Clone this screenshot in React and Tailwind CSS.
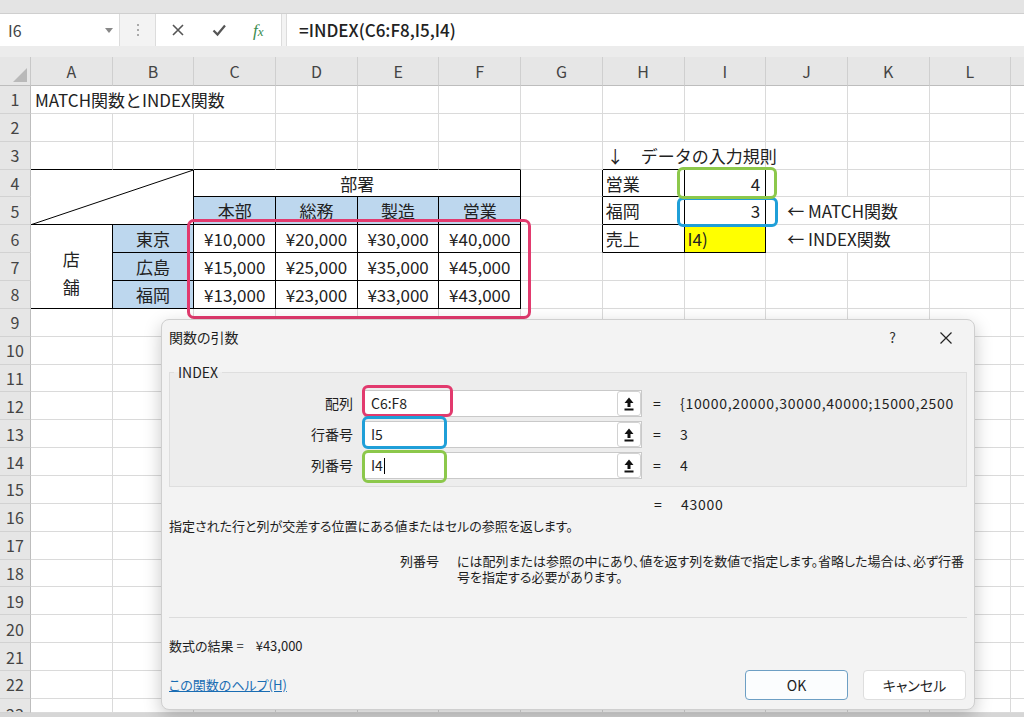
import React from "react";

const COLS = ["A", "B", "C", "D", "E", "F", "G", "H", "I", "J", "K", "L", "M"];
const ROWS = Array.from({ length: 23 }, (_, i) => i + 1);

const BLUE = "bg-[#bdd7ee]";

// cells that carry something (text, colour, merge)
const cells = {
  A1: { cls: "col-span-3 justify-start pl-[4px]", text: "MATCH関数とINDEX関数" },
  H3: { cls: "col-span-2 justify-start pl-[4px]", text: "↓　データの入力規則" },
  A4: { cls: "col-span-2 row-span-2 relative", diag: true },
  C4: { cls: "col-span-4 justify-center", text: "部署" },
  C5: { cls: `${BLUE} justify-center`, text: "本部" },
  D5: { cls: `${BLUE} justify-center`, text: "総務" },
  E5: { cls: `${BLUE} justify-center`, text: "製造" },
  F5: { cls: `${BLUE} justify-center`, text: "営業" },
  A6: { cls: "row-span-3 flex-col justify-center gap-[11px] pt-[11px]", lines: ["店", "舗"] },
  B6: { cls: `${BLUE} justify-center`, text: "東京" },
  B7: { cls: `${BLUE} justify-center`, text: "広島" },
  B8: { cls: `${BLUE} justify-center`, text: "福岡" },
  C6: { cls: "justify-center", text: "¥10,000" },
  D6: { cls: "justify-center", text: "¥20,000" },
  E6: { cls: "justify-center", text: "¥30,000" },
  F6: { cls: "justify-center", text: "¥40,000" },
  C7: { cls: "justify-center", text: "¥15,000" },
  D7: { cls: "justify-center", text: "¥25,000" },
  E7: { cls: "justify-center", text: "¥35,000" },
  F7: { cls: "justify-center", text: "¥45,000" },
  C8: { cls: "justify-center", text: "¥13,000" },
  D8: { cls: "justify-center", text: "¥23,000" },
  E8: { cls: "justify-center", text: "¥33,000" },
  F8: { cls: "justify-center", text: "¥43,000" },
  H4: { cls: "justify-start pl-[3px]", text: "営業" },
  I4: { cls: "justify-end pr-[5px]", text: "4" },
  H5: { cls: "justify-start pl-[3px]", text: "福岡" },
  I5: { cls: "justify-end pr-[5px]", text: "3" },
  H6: { cls: "justify-start pl-[3px]", text: "売上" },
  I6: { cls: "bg-[#ffff00] justify-start pl-[3px]", text: "I4)" },
  J5: { cls: "col-span-2 justify-start pl-[21px]", text: "← MATCH関数" },
  J6: { cls: "col-span-2 justify-start pl-[21px]", text: "← INDEX関数" },
};

const covered = new Set(["B1", "C1", "I3", "B4", "A5", "B5", "D4", "E4", "F4", "A7", "A8", "K5", "K6"]);

const borderFor = (r, c) => {
  const t1 = r >= 4 && r <= 8 && c >= 0 && c <= 5;
  const t2 = r >= 4 && r <= 6 && (c === 7 || c === 8);
  const right = t1 || t2 || (c === 6 && r >= 4 && r <= 6);
  const bottom = t1 || t2 || (r === 3 && (c <= 5 || c === 7 || c === 8));
  return `${right ? "border-r-black" : "border-r-[#dadada]"} ${bottom ? "border-b-black" : "border-b-[#dadada]"}`;
};

function FormulaBar() {
  return (
    <div className="flex h-[32px] bg-[#f3f3f3]">
      <div className="flex w-[120px] items-center justify-between border-r border-[#dcdcdc] bg-white pl-[8px] pr-[6px] text-[16px] text-[#444]">
        <span>I6</span>
        <svg width="8" height="5" viewBox="0 0 8 5">
          <path d="M0 0 L8 0 L4 5 Z" fill="#888" />
        </svg>
      </div>
      <div className="flex w-[35px] flex-col items-center justify-center gap-[3px]">
        <span className="h-[2px] w-[2px] bg-[#aaa]" />
        <span className="h-[2px] w-[2px] bg-[#aaa]" />
        <span className="h-[2px] w-[2px] bg-[#aaa]" />
      </div>
      <div className="flex w-[127px] items-center gap-[27px] border-x border-[#dcdcdc] bg-white pl-[15px]">
        <svg width="14" height="14" viewBox="0 0 14 14">
          <path d="M2 2 L12 12 M12 2 L2 12" stroke="#555" strokeWidth="1.6" />
        </svg>
        <svg width="14" height="14" viewBox="0 0 14 14">
          <path d="M1.5 7.5 L5.5 11.5 L13 2.5" stroke="#555" strokeWidth="2.2" fill="none" />
        </svg>
        <span className="w-[14px] font-['Liberation_Serif',serif] text-[17px] italic leading-none text-[#3a8c4e]">
          f<span className="text-[13px]">x</span>
        </span>
      </div>
      <div className="w-[4px]" />
      <div className="flex flex-1 items-center border-l border-[#dcdcdc] bg-white pl-[12px] text-[17px] font-medium text-[#222]">
        =INDEX(C6:F8,I5,I4)
      </div>
    </div>
  );
}

function Sheet() {
  const items = [];
  items.push(
    <div key="corner" className="relative border-r border-b border-r-[#c8c8c8] border-b-[#bdbdbd] bg-[#e6e6e6]">
      <svg className="absolute bottom-[3px] right-[3px]" width="14" height="14" viewBox="0 0 14 14">
        <path d="M14 0 L14 14 L0 14 Z" fill="#b9b9b9" />
      </svg>
    </div>
  );
  COLS.forEach((c) =>
    items.push(
      <div
        key={`h${c}`}
        className="flex items-center justify-center overflow-hidden border-r border-b border-r-[#cfcfcf] border-b-[#bdbdbd] bg-[#e6e6e6] text-[16px] text-[#444]"
      >
        {c}
      </div>
    )
  );
  ROWS.forEach((r) => {
    items.push(
      <div
        key={`r${r}`}
        className={`flex justify-center overflow-hidden border-r border-b border-r-[#bdbdbd] border-b-[#d2d2d2] bg-[#e6e6e6] text-[16px] text-[#444] ${
          r === 23 ? "items-start pt-[3px]" : "items-center"
        }`}
      >
        {r}
      </div>
    );
    COLS.forEach((col, c) => {
      const key = `${col}${r}`;
      if (covered.has(key)) return;
      const d = cells[key];
      items.push(
        <div
          key={key}
          className={`flex items-center whitespace-nowrap border-r border-b text-[17px] leading-none ${borderFor(r, c)} ${d ? d.cls : ""}`}
        >
          {d && d.diag && (
            <svg className="absolute inset-0 h-full w-full" viewBox="0 0 100 100" preserveAspectRatio="none">
              <line x1="0" y1="100" x2="100" y2="0" stroke="#000" strokeWidth="1" vectorEffect="non-scaling-stroke" />
            </svg>
          )}
          {d && d.text}
          {d && d.lines && d.lines.map((l) => <span key={l}>{l}</span>)}
        </div>
      );
    });
  });
  return (
    <div className="grid grid-cols-[31px_repeat(13,81.7px)] grid-rows-[29px_repeat(22,27.86px)_14px] overflow-hidden">
      {items}
    </div>
  );
}

const UpIcon = () => (
  <svg width="10" height="14" viewBox="0 0 10 14">
    <path d="M5 0.5 L9.5 6 L6.5 6 L6.5 10 L3.5 10 L3.5 6 L0.5 6 Z" fill="#111" />
    <rect x="0.5" y="11.5" width="9" height="2" fill="#111" />
  </svg>
);

function ArgRow({ label, value, result, cursor }) {
  return (
    <div className="flex h-[27px] items-center">
      <div className="w-[183px] text-right text-[14px]">{label}</div>
      <div className="ml-[11px] flex h-full w-[278px] items-center border border-[#c9c9c9] bg-white">
        <div className="flex flex-1 items-center pl-[6px] text-[14px]">
          {value}
          {cursor && <span className="ml-[1px] h-[16px] w-[1px] bg-black" />}
        </div>
        <div className="flex h-[25px] w-[24px] items-center justify-center rounded-[3px] border border-[#d2d2d2] bg-white">
          <UpIcon />
        </div>
      </div>
      <div className="ml-[11px] w-[27px] text-[14px]">=</div>
      <div className="w-[280px] overflow-hidden whitespace-nowrap text-[14px] tracking-[0.7px]">{result}</div>
    </div>
  );
}

function Dialog() {
  return (
    <div className="absolute left-[161px] top-[319px] flex h-[391px] w-[814px] flex-col rounded-[8px] border border-[#cfcfcf] bg-[#f3f3f3] px-[7px] text-[#1e1e1e] shadow-[0_6px_18px_rgba(0,0,0,0.22)] [font-feature-settings:'palt']">
      <div className="flex h-[35px] items-center text-[14px]">
        <span>関数の引数</span>
        <div className="ml-auto flex items-center gap-[44px] pr-[15px]">
          <span className="text-[14px] text-[#333]">?</span>
          <svg width="12" height="12" viewBox="0 0 12 12">
            <path d="M0.5 0.5 L11.5 11.5 M11.5 0.5 L0.5 11.5" stroke="#222" strokeWidth="1.2" />
          </svg>
        </div>
      </div>
      <fieldset className="mt-[7px] flex flex-col gap-[4px] border border-[#dedede] bg-[#ededed] pb-[7px] pt-[8px]">
        <legend className="ml-[4px] px-[4px] text-[14px] leading-[20px]">INDEX</legend>
        <ArgRow label="配列" value="C6:F8" result="{10000,20000,30000,40000;15000,2500" />
        <ArgRow label="行番号" value="I5" result="3" />
        <ArgRow label="列番号" value="I4" result="4" cursor />
      </fieldset>
      <div className="mt-[7px] flex h-[20px] items-center text-[14px]">
        <span className="ml-[485px] w-[27px]">=</span>
        <span className="tracking-[0.7px]">43000</span>
      </div>
      <div className="mt-[2px] flex h-[20px] items-center text-[13px]">
        指定された行と列が交差する位置にある値またはセルの参照を返します。
      </div>
      <div className="mt-[17px] flex text-[13px] leading-[16px]">
        <span className="ml-[231px] w-[57px] whitespace-nowrap">列番号</span>
        <div className="flex flex-col">
          <span className="h-[16px] whitespace-nowrap">には配列または参照の中にあり、値を返す列を数値で指定します。省略した場合は、必ず行番</span>
          <span className="h-[16px] whitespace-nowrap">号を指定する必要があります。</span>
        </div>
      </div>
      <div className="mt-[32px] h-px bg-[#dcdcdc]" />
      <div className="mt-[18px] flex h-[20px] items-center text-[13px]">
        <span>数式の結果 =</span>
        <span className="ml-[12px]">¥43,000</span>
      </div>
      <div className="mt-[14px] flex h-[30px] items-center">
        <span className="text-[13px] text-[#1a6db3] underline">この関数のヘルプ(H)</span>
        <div className="ml-auto flex gap-[15px] pr-[1px]">
          <button className="h-[30px] w-[103px] rounded-[4px] border border-[#6d9fc4] bg-[#fbfdfe] text-[14px]">OK</button>
          <button className="h-[30px] w-[103px] rounded-[4px] border border-[#dedede] bg-white text-[14px]">キャンセル</button>
        </div>
      </div>
    </div>
  );
}

export default function App() {
  return (
    <div className="relative h-[717px] w-[1024px] overflow-hidden bg-white font-['Noto_Sans_CJK_JP','Noto_Sans',sans-serif] text-[#222]">
      <div className="h-[14px] border-b border-[#cfcfcf] bg-[#e4e4e4]" />
      <FormulaBar />
      <div className="h-[11px] bg-[#ececec]" />
      <Sheet />
      <div className="h-[4px] bg-[#d6d6d6]" />

      {/* highlight boxes on the sheet */}
      <div className="absolute left-[187px] top-[219px] h-[100px] w-[344px] rounded-[7px] border-[3px] border-[#e23a6e]" />
      <div className="absolute left-[677px] top-[197px] h-[30px] w-[101px] rounded-[6px] border-[3px] border-[#1f9fd8]" />
      <div className="absolute left-[677px] top-[167px] h-[32px] w-[100px] rounded-[6px] border-[3px] border-[#8cc84b]" />

      <Dialog />

      {/* highlight boxes on the dialog */}
      <div className="absolute left-[362px] top-[385px] h-[32px] w-[91px] rounded-[6px] border-[3px] border-[#e23a6e]" />
      <div className="absolute left-[362px] top-[416px] h-[33px] w-[85px] rounded-[6px] border-[3px] border-[#1f9fd8]" />
      <div className="absolute left-[362px] top-[450px] h-[33px] w-[85px] rounded-[6px] border-[3px] border-[#8cc84b]" />
    </div>
  );
}
